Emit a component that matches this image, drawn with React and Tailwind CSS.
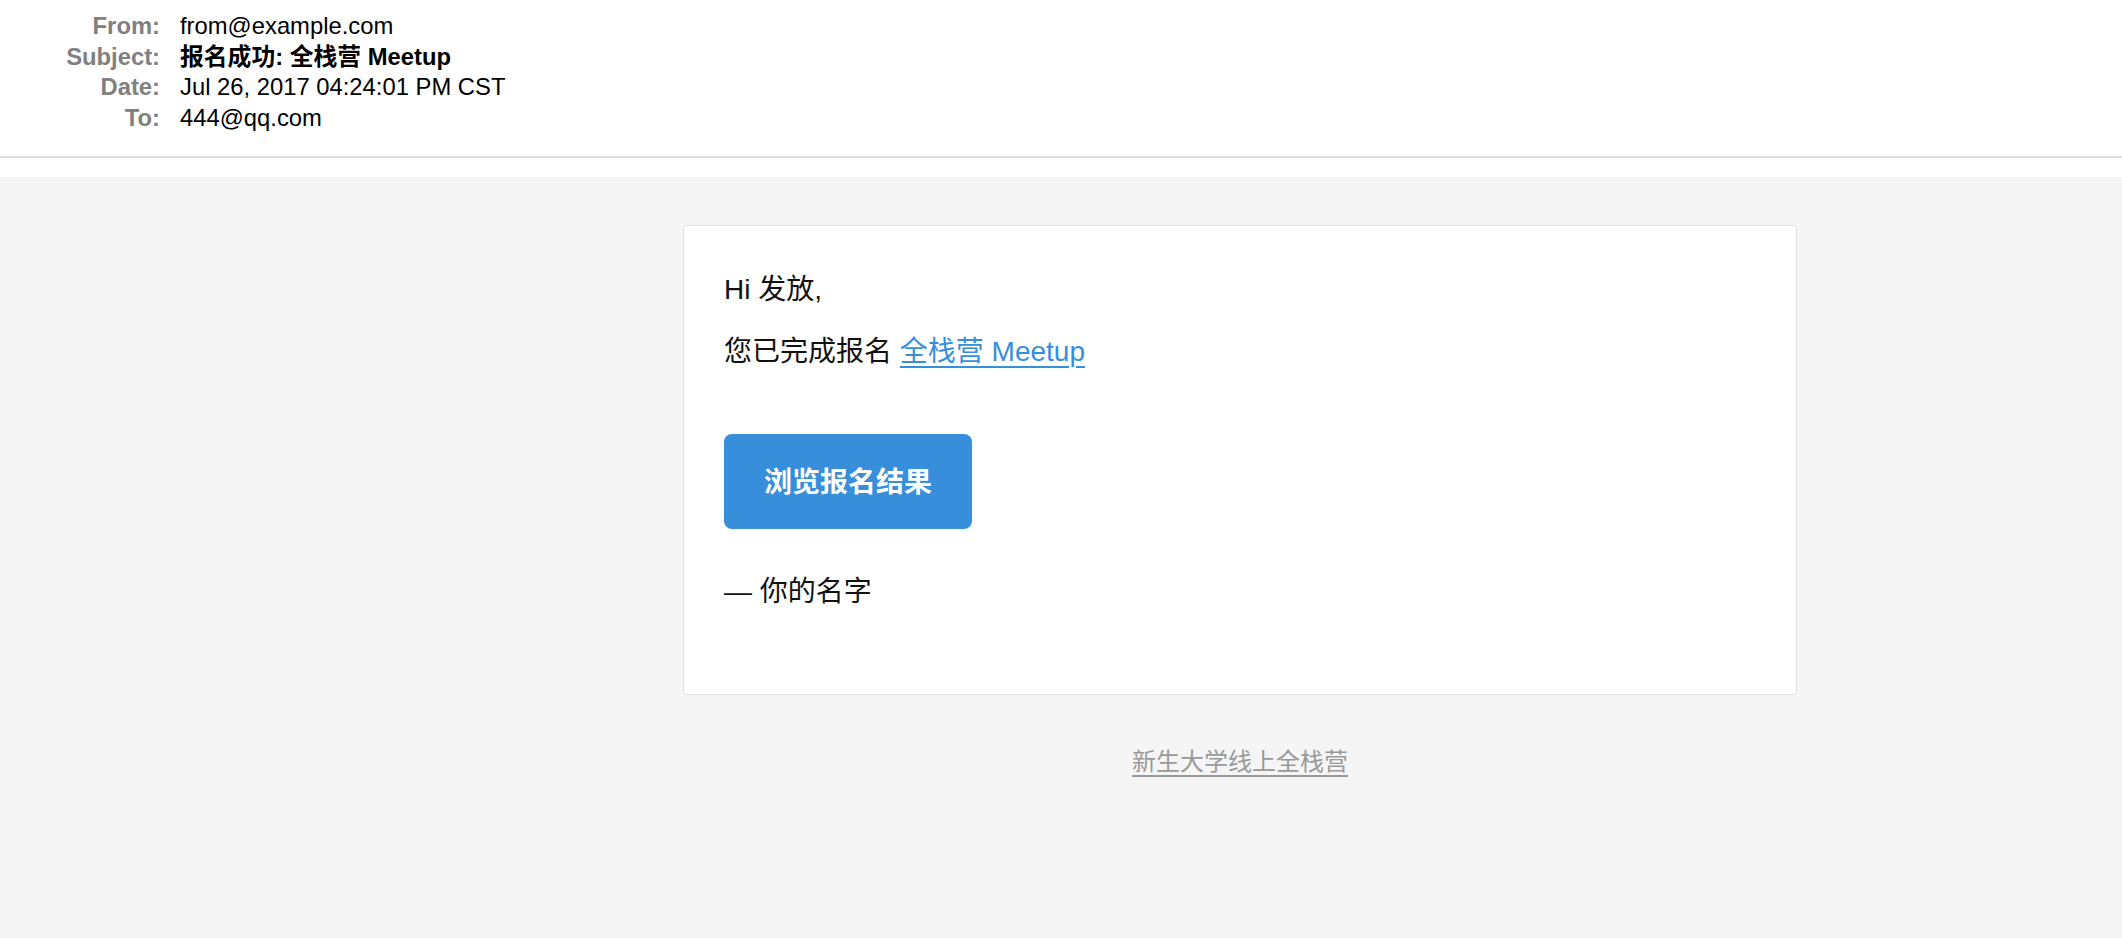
export default function App() {
  const headers = [
    { label: 'From:', value: 'from@example.com' },
    { label: 'Subject:', value: '报名成功: 全栈营 Meetup', bold: true },
    { label: 'Date:', value: 'Jul 26, 2017 04:24:01 PM CST' },
    { label: 'To:', value: '444@qq.com' },
  ];

  return (
    <div
      className="min-h-[938px] bg-white flex flex-col"
      style={{ fontFamily: '"Liberation Sans", "Noto Sans CJK SC", sans-serif' }}
    >
      {/* Mail header */}
      <header className="pt-[11px] pb-[23px]">
        {headers.map((h) => (
          <div key={h.label} className="flex h-[30.5px] items-center text-[23.8px] leading-[30px]">
            <span className="w-[160px] text-right font-bold text-[#808080]">{h.label}</span>
            <span className={'ml-[20px] text-black ' + (h.bold ? 'font-bold' : '')}>{h.value}</span>
          </div>
        ))}
      </header>
      <div className="h-[2px] bg-[#dddddd]" />
      <div className="h-[19px] bg-white" />

      {/* Body */}
      <main className="flex-1 bg-[#f5f5f5] pt-[48px]">
        <div className="ml-[683px] w-[1114px] rounded-[4px] border border-[#e3e3e3] bg-white pl-[40px] pt-[44px] pb-[82px] text-[28px] text-[#111]">
          <p className="h-[40px] leading-[40px]">Hi 发放,</p>
          <p className="mt-[22px] h-[40px] leading-[40px]">
            您已完成报名{' '}
            <a href="#" className="text-[#368fdb] underline underline-offset-[5px] decoration-[2px]">
              全栈营 Meetup
            </a>
          </p>
          <button className="mt-[62px] flex h-[95px] w-[248px] items-center justify-center rounded-[8px] bg-[#378fdb] pt-[3px] text-[28px] font-bold text-white">
            浏览报名结果
          </button>
          <p className="mt-[43px] h-[40px] leading-[40px]">— 你的名字</p>
        </div>

        <div className="ml-[683px] mt-[50px] flex w-[1114px] justify-center">
          <a href="#" className="text-[24px] leading-[34px] text-[#999999] underline underline-offset-[5px] decoration-[2px]">
            新生大学线上全栈营
          </a>
        </div>
      </main>
    </div>
  );
}
